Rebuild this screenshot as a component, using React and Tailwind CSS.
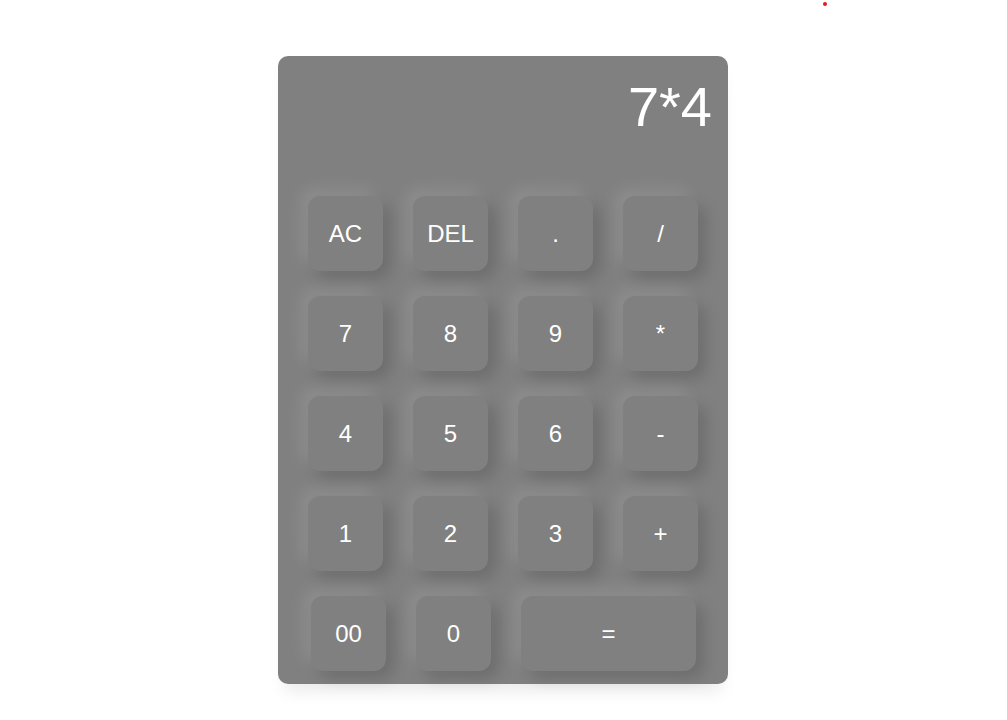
import React from "react";

const rows = [
  ["AC", "DEL", ".", "/"],
  ["7", "8", "9", "*"],
  ["4", "5", "6", "-"],
  ["1", "2", "3", "+"],
];

const btn =
  "h-[75px] rounded-[12px] bg-[#808080] text-white text-[24px] flex items-center justify-center shadow-[-8px_-8px_15px_rgba(255,255,255,0.1),8px_8px_15px_rgba(0,0,0,0.15)]";

const App = () => {
  return (
    <div
      className="relative w-[1007px] h-[720px] bg-white"
      style={{ fontFamily: '"Liberation Sans", Arial, sans-serif' }}
    >
      {/* stray red dot in top corner */}
      <div className="absolute left-[823px] top-[2px] w-[4px] h-[4px] rounded-full bg-[#e81a1a]" />

      <div className="absolute left-[278px] top-[56px] w-[450px] h-[628px] rounded-[10px] bg-[#808080] shadow-[0_14px_16px_-6px_rgba(0,0,0,0.08)]">
        <div className="h-[140px] pt-[19px] pr-[16px] text-right text-white text-[56px] leading-[64px]">
          7*4
        </div>
        <div className="px-[30px] flex flex-col gap-[25px]">
          {rows.map((row, i) => (
            <div key={i} className="flex gap-[30px]">
              {row.map((k) => (
                <button key={k} className={btn + " w-[75px]"}>
                  {k}
                </button>
              ))}
            </div>
          ))}
          <div className="flex gap-[30px] ml-[3px]">
            <button className={btn + " w-[75px]"}>00</button>
            <button className={btn + " w-[75px]"}>0</button>
            <button className={btn + " w-[175px]"}>=</button>
          </div>
        </div>
      </div>
    </div>
  );
};

export default App;
